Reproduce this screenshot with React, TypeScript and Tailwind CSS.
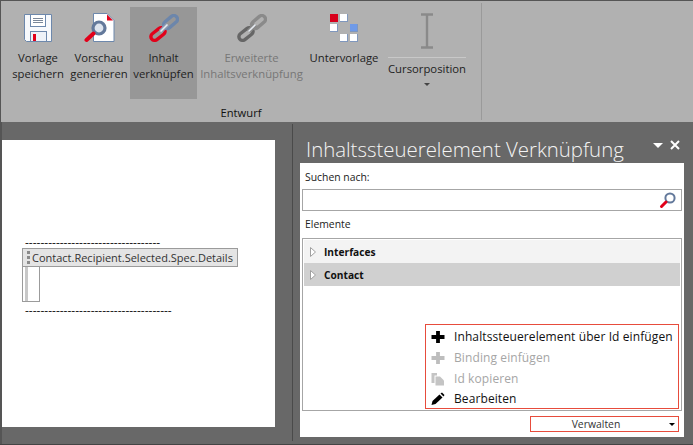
const font = { fontFamily: '"Open Sans", "Noto Sans", sans-serif' };

function Floppy() {
  return (
    <svg width="28" height="28" viewBox="0 0 28 28" className="block">
      <path d="M0.5 0.5H27.5V27.5H2.5L0.5 25.5Z" fill="#f7f9fc" stroke="#6d88ac" strokeWidth="1" />
      <rect x="6.5" y="0.5" width="15" height="12" fill="#fff" stroke="#6d88ac" />
      <path d="M9 4.5H19M9 6.5H19M9 8.5H19" stroke="#7a8799" strokeWidth="1" />
      <rect x="6.5" y="17.5" width="16" height="10" fill="#eef2f8" stroke="#6d88ac" />
      <rect x="9" y="20" width="3" height="7" fill="#e2001a" />
    </svg>
  );
}

function Preview() {
  return (
    <svg width="31" height="30" viewBox="0 0 31 30" className="block">
      <path d="M9.5 0.5H23L30 7.5V28.5H9.5Z" fill="#fff" stroke="#6d88ac" />
      <path d="M23 1.5L29 7.5H23Z" fill="#e2001a" />
      <circle cx="15" cy="15" r="6" fill="#dde4ee" stroke="#63799b" strokeWidth="3.2" />
      <path d="M9.5 20.5L2.5 27" stroke="#e2001a" strokeWidth="4" strokeLinecap="round" />
    </svg>
  );
}

function Link({ a, b, c }: { a: string; b: string; c: string }) {
  return (
    <svg width="30" height="28" viewBox="0 0 30 28" className="block">
      <rect x="-8" y="-3.7" width="16" height="7.4" rx="3.7" transform="translate(9 20) rotate(-38)" fill="none" stroke={a} strokeWidth="3.4" />
      <rect x="-8" y="-3.7" width="16" height="7.4" rx="3.7" transform="translate(21.5 8) rotate(-40)" fill="none" stroke={b} strokeWidth="3.4" />
      <path d="M11.5 17.5L18.5 10.5" stroke={c} strokeWidth="4.5" />
      <path d="M11.5 17.5L18.5 10.5" stroke="#e6ebf2" strokeWidth="1.6" />
    </svg>
  );
}

function SubTemplate() {
  const box = 'absolute w-[8px] h-[8px] border-r border-b border-[#7f97bd]';
  return (
    <div className="relative w-[28px] h-[28px]">
      <div className="absolute left-0 top-0 w-[8px] h-[8px] bg-[#d8001c]" />
      <div className={`${box} left-[10px] top-0 bg-white`} />
      <div className={`${box} left-0 top-[10px] bg-white`} />
      <div className={`${box} left-[20px] top-[10px] bg-[#6f9ae8]`} />
      <div className={`${box} left-[10px] top-[20px] bg-white`} />
      <div className={`${box} left-[20px] top-[20px] bg-white`} />
    </div>
  );
}

function Caret() {
  return (
    <svg width="14" height="36" viewBox="0 0 14 36" className="block">
      <path d="M1 1.5H13M1 34.5H13M7 1.5V34.5" stroke="#8a8a8a" strokeWidth="2.4" fill="none" />
    </svg>
  );
}

function RibbonButton({ icon, lines, active, disabled, width }: { icon: React.ReactNode; lines: string[]; active?: boolean; disabled?: boolean; width: string }) {
  return (
    <div className={`flex flex-col items-center shrink-0 h-[92px] ${width} ${active ? 'bg-[#979797]' : ''}`}>
      <div className="h-[38px] mt-[2px] flex items-center justify-center">{icon}</div>
      <div className={`mt-[3px] text-[11.3px] leading-[16px] text-center whitespace-nowrap ${disabled ? 'text-[#777777]' : 'text-[#222222]'}`}>
        {lines.map((l) => (
          <div key={l}>{l}</div>
        ))}
      </div>
    </div>
  );
}

export default function App() {
  return (
    <div style={font} className="w-[693px] h-[445px] overflow-hidden bg-[#686868] flex flex-col border-b border-[#444444]">
      <div className="h-[122px] shrink-0 bg-[#b1b1b1] border-t-[1px] border-l border-[#555555] flex relative">
        <div className="w-[481px] shrink-0 border-r border-[#9a9a9a] my-[2px] flex flex-col">
          <div className="flex items-start pt-[4px] pl-[7px]">
            <RibbonButton width="w-[60px]" icon={<Floppy />} lines={['Vorlage', 'speichern']} />
            <RibbonButton width="w-[62px]" icon={<Preview />} lines={['Vorschau', 'generieren']} />
            <RibbonButton width="w-[67px]" active icon={<Link a="#e2001a" b="#6c86ab" c="#8d9bb0" />} lines={['Inhalt', 'verknüpfen']} />
            <RibbonButton width="w-[109px]" disabled icon={<Link a="#666666" b="#8a8a8a" c="#8a8a8a" />} lines={['Erweiterte', 'Inhaltsverknüpfung']} />
            <RibbonButton width="w-[76px]" icon={<SubTemplate />} lines={['Untervorlage']} />
            <div className="w-[82px] ml-[4px] h-[92px] flex flex-col items-center shrink-0">
              <div className="h-[44px] mt-[2px] flex items-center justify-center"><Caret /></div>
              <div className="w-[78px] h-px bg-[#c8c8c8] mt-[4px]" />
              <div className="text-[11.3px] leading-[16px] text-[#222222] mt-[3px]">Cursorposition</div>
              <div className="w-0 h-0 mt-[6px] border-l-[3px] border-r-[3px] border-t-[3px] border-l-transparent border-r-transparent border-t-[#444444]" />
            </div>
          </div>
          <div className="text-[11.2px] leading-[16px] text-[#111111] text-center mt-[6px]">Entwurf</div>
        </div>
      </div>
      <div className="flex-1 flex min-h-0 border-l-2 border-[#555555]">
        <div className="w-[291px] shrink-0 pt-[16px] mt-[2px] mb-[3px] border-r border-[#4a4a4a]">
          <div className="w-[273px] h-[287px] bg-white pt-[98px] text-[12px] leading-[14px] text-black">
            <div className="pl-[23px] whitespace-nowrap h-[10px] leading-[10px] text-[#222222]">-----------------------------------</div>
            <div className="ml-[20px] flex items-center w-[216px] h-[19px] bg-[#e4e4e4] border border-[#9b9b9b]">
              <div className="ml-[4px] w-[3px] flex flex-col items-center gap-[2px]">
                <div className="w-[3px] h-[3px] bg-[#8a8a8a]" />
                <div className="w-[3px] h-[3px] bg-[#8a8a8a]" />
                <div className="w-[3px] h-[3px] bg-[#8a8a8a]" />
              </div>
              <span className="ml-[2px] text-[11px] text-[#333333] whitespace-nowrap">Contact.Recipient.Selected.Spec.Details</span>
            </div>
            <div className="ml-[20px] w-[18px] h-[35px] border border-t-0 border-[#9b9b9b] pl-[2px]">
              <div className="w-[3px] h-full bg-[#c8c8c8]" />
            </div>
            <div className="pl-[23px] mt-[2px] whitespace-nowrap h-[14px] text-[#222222]">--------------------------------------</div>
          </div>
        </div>
        <div className="w-[399px] flex flex-col pl-[7px] min-w-0">
          <div className="h-[41px] w-[384px] shrink-0 flex items-start justify-between">
            <span className="text-[20.4px] font-light text-[#f4f4f4] leading-[26px] whitespace-nowrap pl-[6px] pt-[14px]">Inhaltssteuerelement Verknüpfung</span>
            <div className="flex items-center gap-[7px] mt-[18px] pr-[4px]">
              <div className="w-0 h-0 border-l-[5px] border-r-[5px] border-t-[5px] border-l-transparent border-r-transparent border-t-white" />
              <svg width="10" height="10" viewBox="0 0 10 10" className="block"><path d="M1 1L9 9M9 1L1 9" stroke="#fff" strokeWidth="2" /></svg>
            </div>
          </div>
          <div className="w-[384px] h-[274px] bg-white flex flex-col px-[2px] relative">
            <div className="text-[10.4px] leading-[14px] text-[#222222] pl-[3px] pt-[7px] h-[21px]">Suchen nach:</div>
            <div className="h-[22px] mt-[5px] border border-[#a6a6a6] flex items-center justify-end pr-[4px]">
              <svg width="18" height="18" viewBox="0 0 18 18" className="block">
                <circle cx="11" cy="7" r="4.6" fill="#fff" stroke="#63799b" strokeWidth="2" />
                <path d="M7 11L2.5 15.5" stroke="#e2001a" strokeWidth="3" strokeLinecap="round" />
              </svg>
            </div>
            <div className="text-[10.4px] leading-[14px] text-[#222222] pl-[3px] mt-[6px]">Elemente</div>
            <div className="h-[173px] mt-[7px] border border-[#a6a6a6] p-[1px]">
              <div>
                <TreeRow label="Interfaces" cls="bg-[#f3f3f3]" />
                <TreeRow label="Contact" cls="bg-[#d0d0d0]" />
              </div>
            </div>
            <div className="flex justify-end mt-[5px] pr-[3px]">
              <div className="w-[149px] h-[16px] border border-[#e74c3c] flex items-center text-[10.4px] text-[#333333]">
                <span className="flex-1 text-center pt-[1px] pr-[8px]">Verwalten</span>
                <div className="w-0 h-0 mr-[3px] border-l-[3.5px] border-r-[3.5px] border-t-[3.5px] border-l-transparent border-r-transparent border-t-black" />
              </div>
            </div>
            <div className="absolute left-[125px] top-[161px] w-[254px] h-[85px] bg-white border border-[#e74c3c] pl-[5px] pt-[2px] text-[12px] tracking-[0.1px] leading-[20px] whitespace-nowrap">
              <Menu label="Inhaltssteuerelement über Id einfügen" icon={<Plus color="#000" />} />
              <Menu label="Binding einfügen" disabled icon={<Plus color="#bdbdbd" />} />
              <Menu label="Id kopieren" disabled icon={<Copy />} />
              <Menu label="Bearbeiten" icon={<Pen />} />
            </div>
          </div>
        </div>
      </div>
    </div>
  );
}

function TreeRow({ label, cls }: { label: string; cls: string }) {
  return (
    <div className={`h-[23px] flex items-center ${cls}`}>
      <svg width="6" height="10" viewBox="0 0 6 10" className="ml-[6px] block"><path d="M0.5 0.5L5.5 5L0.5 9.5Z" fill="#fff" stroke="#a0a0a0" /></svg>
      <span className="ml-[8px] pt-[2px] text-[10.2px] font-bold text-[#111111]">{label}</span>
    </div>
  );
}

function Plus({ color }: { color: string }) {
  return <svg width="14" height="14" viewBox="0 0 14 14" className="block"><path d="M7 1V13M0.5 7H13.5" stroke={color} strokeWidth="3.8" /></svg>;
}

function Copy() {
  return <svg width="14" height="14" viewBox="0 0 14 14" className="block"><path d="M0.5 1H6V3.5H3.5V11H0.5Z" fill="#c4c4c4" /><path d="M4.5 4.5H9L13 8.5V13.5H4.5Z" fill="#c4c4c4" /></svg>;
}

function Pen() {
  return <svg width="14" height="14" viewBox="0 0 14 14" className="block"><path d="M0.5 13L1.5 9L8.5 2.5L11.5 5.5L4.5 12Z" fill="#000" /><path d="M9.5 1.5L11 0.5L13.5 3L12.5 4.5Z" fill="#000" /></svg>;
}

function Menu({ label, icon, disabled }: { label: string; icon: React.ReactNode; disabled?: boolean }) {
  return (
    <div className={`h-[20.7px] flex items-center ${disabled ? 'text-[#a6a6a6]' : 'text-[#111111]'}`}>
      <span className="w-[14px] mr-[9px] flex justify-center">{icon}</span>
      {label}
    </div>
  );
}
